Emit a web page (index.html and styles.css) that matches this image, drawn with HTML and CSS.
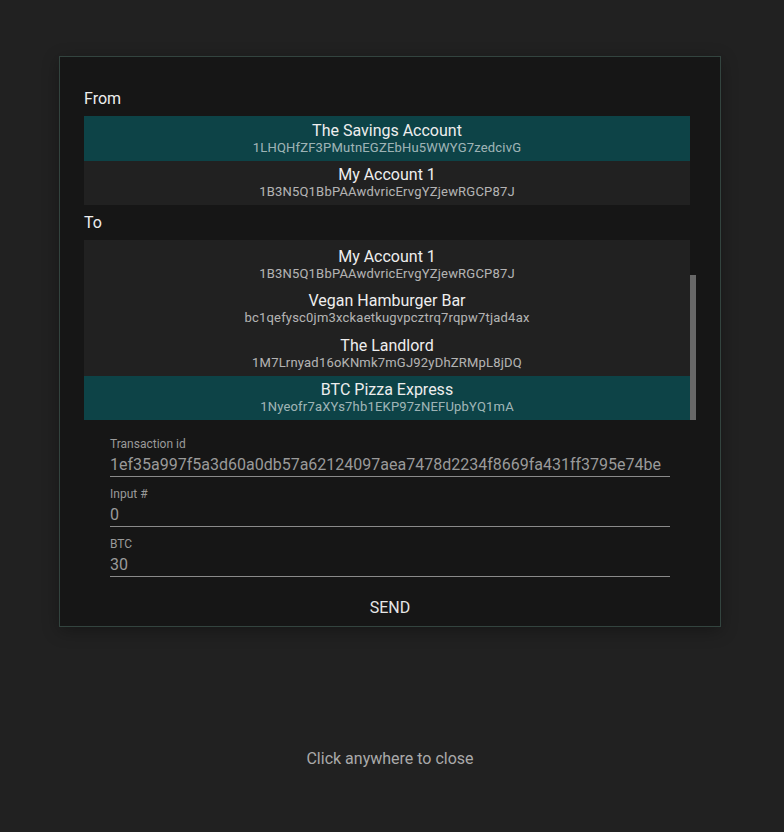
FILE: index.html
```html
<!DOCTYPE html>
<html>
<head>
<meta charset="utf-8">
<link rel="stylesheet" href="styles.css">
</head>
<body>
<div class="overlay">
  <div class="dialog">
    <div class="section-label">From</div>
    <div class="list-row">
      <div class="list">
        <div class="item selected"><div class="name">The Savings Account</div><div class="addr">1LHQHfZF3PMutnEGZEbHu5WWYG7zedcivG</div></div>
        <div class="item"><div class="name">My Account 1</div><div class="addr">1B3N5Q1BbPAAwdvricErvgYZjewRGCP87J</div></div>
      </div>
      <div class="track"></div>
    </div>
    <div class="section-label">To</div>
    <div class="list-row">
      <div class="list tall">
        <div class="item"><div class="name">My Account 1</div><div class="addr">1B3N5Q1BbPAAwdvricErvgYZjewRGCP87J</div></div>
        <div class="item"><div class="name">Vegan Hamburger Bar</div><div class="addr">bc1qefysc0jm3xckaetkugvpcztrq7rqpw7tjad4ax</div></div>
        <div class="item"><div class="name">The Landlord</div><div class="addr">1M7Lrnyad16oKNmk7mGJ92yDhZRMpL8jDQ</div></div>
        <div class="item selected"><div class="name">BTC Pizza Express</div><div class="addr">1Nyeofr7aXYs7hb1EKP97zNEFUpbYQ1mA</div></div>
      </div>
      <div class="track"><div class="thumb"></div></div>
    </div>
    <div class="fields">
      <div class="field"><div class="flabel">Transaction id</div><div class="fvalue">1ef35a997f5a3d60a0db57a62124097aea7478d2234f8669fa431ff3795e74be</div></div>
      <div class="field"><div class="flabel">Input #</div><div class="fvalue">0</div></div>
      <div class="field"><div class="flabel">BTC</div><div class="fvalue">30</div></div>
    </div>
    <div class="actions"><div class="send">SEND</div></div>
  </div>
  <div class="hint">Click anywhere to close</div>
</div>
</body>
</html>
```
FILE: styles.css
```css
html, body {
  margin: 0;
  padding: 0;
  background: #212121;
  font-family: Roboto, "Liberation Sans", sans-serif;
  color: #eeeeee;
}
.overlay {
  width: 784px;
  height: 832px;
  padding-right: 4px;
  padding-top: 56px;
  box-sizing: border-box;
  display: flex;
  flex-direction: column;
  align-items: center;
}
.dialog {
  width: 662px;
  box-sizing: border-box;
  border: 1px solid #33443f;
  background: #161616;
  padding: 24px 24px 0 24px;
  box-shadow: 0 4px 16px rgba(0,0,0,0.3);
}
.section-label {
  height: 35px;
  line-height: 35px;
  font-size: 16px;
  color: #eeeeee;
}
.list-row {
  display: flex;
  width: 612px;
}
.list {
  width: 606px;
  background: #212121;
  display: flex;
  flex-direction: column;
}
.list.tall {
  height: 180px;
  justify-content: flex-end;
}
.track {
  width: 6px;
}
.thumb {
  margin-top: 34.5px;
  height: 145.5px;
  background: #686868;
}
.item {
  height: 44.5px;
  flex: none;
  box-sizing: border-box;
  padding-top: 4.5px;
  background: #212121;
  text-align: center;
}
.item.selected {
  background: #0d4347;
}
.name {
  font-size: 16px;
  line-height: 19px;
  color: #eeeeee;
}
.addr {
  font-size: 13px;
  line-height: 15px;
  letter-spacing: 0.2px;
  color: rgba(255,255,255,0.68);
}
.item.selected .addr {
  color: rgba(255,255,255,0.62);
}
.fields {
  margin: 15px 26px 0 26px;
  display: flex;
  flex-direction: column;
  gap: 8px;
}
.field {
  border-bottom: 1px solid #8a8a8a;
  padding-top: 1.5px;
  padding-bottom: 2px;
}
.flabel {
  font-size: 12px;
  line-height: 14px;
  color: #9a9a9a;
}
.fvalue {
  margin-top: 4.5px;
  font-size: 16px;
  line-height: 19px;
  color: #9a9a9a;
  white-space: nowrap;
}
.actions {
  margin-top: 13px;
  display: flex;
  justify-content: center;
}
.send {
  height: 36px;
  line-height: 36px;
  font-size: 16px;
  color: #e6e6e6;
  padding: 0 8px;
}
.hint {
  margin-top: 121.5px;
  font-size: 16px;
  line-height: 19px;
  color: #aaaaaa;
}
```
